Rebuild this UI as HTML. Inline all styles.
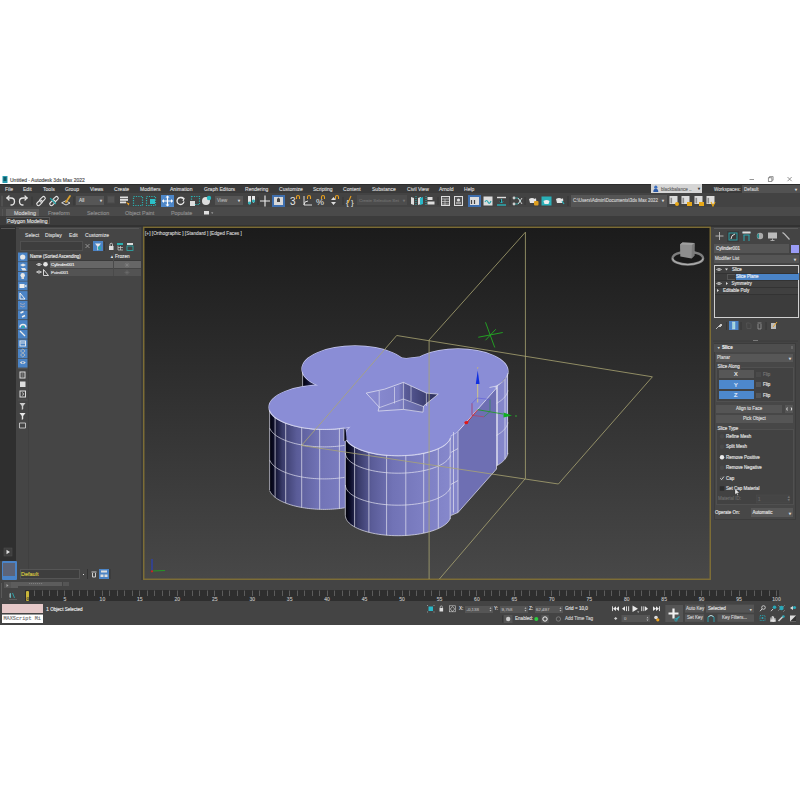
<!DOCTYPE html>
<html><head><meta charset="utf-8">
<style>
*{margin:0;padding:0;box-sizing:border-box}
html,body{-webkit-font-smoothing:antialiased;width:800px;height:800px;background:#fff;overflow:hidden;position:relative;font-family:"Liberation Sans",sans-serif}
.a{position:absolute}
.t{position:absolute;white-space:nowrap;font-size:5px;line-height:6px;color:#d8d8d8;-webkit-text-stroke:0.15px currentColor}
svg{overflow:visible}
</style></head><body>
<div class="a" style="left:0;top:184px;width:800px;height:440px;background:#444"></div>
<!-- ===== TITLE BAR ===== -->
<svg class="a" style="left:0;top:170px" width="800" height="15">
 <rect x="2.5" y="6" width="5" height="7" fill="#2a9db0"/><rect x="3.5" y="7" width="3" height="4" fill="#0e5d6a"/>
 <path d="M749.5 9.5h4.5" stroke="#6a6a6a" stroke-width="0.7"/>
 <rect x="768.3" y="7.8" width="3.6" height="3.6" fill="none" stroke="#6a6a6a" stroke-width="0.7"/><path d="M769.5 7.8v-1.2h3.6v3.6h-1.2" fill="none" stroke="#6a6a6a" stroke-width="0.7"/>
 <path d="M787.5 7l4.2 4.2M791.7 7l-4.2 4.2" stroke="#6a6a6a" stroke-width="0.7"/>
</svg>
<div class="t" style="left:10px;top:177px;font-size:5px;color:#4a4a4a">Untitled - Autodesk 3ds Max 2022</div>

<!-- ===== MENU BAR ===== -->
<div class="a" style="left:0;top:184.3px;width:800px;height:9px;background:#3a3a3a;border-top:0.7px solid #2c2c2c"></div>
<div class="t" style="top:186.3px;font-size:5.05px;color:#d6d6d6;left:0">
<span class="a" style="left:5px">File</span><span class="a" style="left:23px">Edit</span><span class="a" style="left:43px">Tools</span><span class="a" style="left:65px">Group</span><span class="a" style="left:90px">Views</span><span class="a" style="left:114px">Create</span><span class="a" style="left:140px">Modifiers</span><span class="a" style="left:170px">Animation</span><span class="a" style="left:204px">Graph Editors</span><span class="a" style="left:245px">Rendering</span><span class="a" style="left:279px">Customize</span><span class="a" style="left:313px">Scripting</span><span class="a" style="left:343px">Content</span><span class="a" style="left:372px">Substance</span><span class="a" style="left:407px">Civil View</span><span class="a" style="left:439px">Arnold</span><span class="a" style="left:464px">Help</span>
</div>
<div class="a" style="left:651px;top:184px;width:51px;height:9px;background:#d6d6d6"></div>
<svg class="a" style="left:652px;top:184px" width="8" height="9"><circle cx="3.8" cy="3.2" r="1.6" fill="#3b6fc0"/><path d="M1.3 8q0-3.3 2.5-3.3q2.5 0 2.5 3.3z" fill="#2c5aa8"/></svg>
<div class="t" style="left:661px;top:186.5px;font-size:4.6px;color:#6a6a6a">blackbalance ..</div>
<div class="t" style="left:697px;top:186px;font-size:4px;color:#333">&#9660;</div>
<div class="t" style="left:714px;top:186.5px;font-size:4.6px;color:#cfcfcf">Workspaces:</div>
<div class="a" style="left:742px;top:185px;width:58px;height:8px;background:#525252"></div>
<div class="t" style="left:744px;top:186.5px;font-size:4.6px;color:#d0d0d0">Default</div>
<div class="t" style="left:794px;top:186.5px;font-size:4px;color:#ddd">&#9660;</div>

<!-- ===== MAIN TOOLBAR ===== -->
<div class="a" style="left:0;top:193.2px;width:800px;height:14px;background:#434343"></div>
<div class="a" style="left:76px;top:196px;width:28px;height:9px;background:#565656"></div>
<div class="t" style="left:79px;top:197.5px;font-size:4.8px;color:#d0d0d0">All</div>
<div class="t" style="left:99px;top:198px;font-size:4px;color:#ddd">&#9660;</div>
<div class="a" style="left:161px;top:195px;width:13px;height:12px;background:#4e87c8"></div>
<div class="a" style="left:215px;top:196px;width:28px;height:9px;background:#565656"></div>
<div class="t" style="left:217px;top:197.5px;font-size:4.8px;color:#aaa">View</div>
<div class="t" style="left:237px;top:198px;font-size:4px;color:#ddd">&#9660;</div>
<div class="a" style="left:272px;top:195px;width:13px;height:12px;background:#3f6fae"></div>
<div class="a" style="left:274px;top:197px;width:9px;height:8px;background:#d8d8d8"></div>
<div class="a" style="left:357px;top:195px;width:50px;height:10px;background:#4c4c4c"></div>
<div class="t" style="left:359px;top:197.5px;font-size:4.35px;color:#6e6e6e">Create Selection Set</div>
<div class="t" style="left:402px;top:198px;font-size:4px;color:#777">&#9660;</div>
<div class="a" style="left:468px;top:195px;width:13px;height:12px;background:#3f6fae"></div>
<div class="a" style="left:571px;top:195px;width:96px;height:12px;background:#555"></div>
<div class="t" style="left:573px;top:197.5px;font-size:4.5px;color:#cdcdcd">C:\Users\Admin\Documents\3ds Max 2022</div>
<div class="t" style="left:661px;top:198px;font-size:4px;color:#ddd">&#9660;</div>
<svg class="a" style="left:0;top:193px" width="800" height="15">
 <g fill="none" stroke="#e6e6e6" stroke-width="1.3" stroke-linecap="round">
  <path d="M2 3v10" stroke="#666" stroke-width="0.8"/>
  <path d="M7 5h4q3.5 0 3.5 3.5t-3.5 3.5"/><path d="M9 3l-2 2l2 2"/>
  <path d="M27 5h-4q-3.5 0-3.5 3.5t3.5 3.5"/><path d="M25 3l2 2l-2 2"/>
  <path d="M32 4v8" stroke="#333" stroke-width="0.8"/>
  <rect x="36.3" y="8.2" width="6.5" height="3.4" rx="1.7" transform="rotate(-45 39.5 9.9)" stroke-width="1.1"/><rect x="39.2" y="4.6" width="6.5" height="3.4" rx="1.7" transform="rotate(-45 42.5 6.3)" stroke-width="1.1"/>
  <rect x="49.3" y="8.2" width="6.5" height="3.4" rx="1.7" transform="rotate(-45 52.5 9.9)" stroke-width="1.1"/><rect x="52.2" y="4.6" width="6.5" height="3.4" rx="1.7" transform="rotate(-45 55.5 6.3)" stroke-width="1.1"/>
  <path d="M50.5 5.5l5 5" stroke="#22a3a8" stroke-width="1.3"/>
  <path d="M62 10l4 2l4-2l-4-2z" stroke-width="0.9"/>
  <path d="M66 9l4-6" stroke="#d8a030" stroke-width="1.8"/>
  <path d="M74 4v8" stroke="#333" stroke-width="0.8"/>
 </g>
 <rect x="107.5" y="3" width="7" height="7" fill="#555" stroke="#4a4a4a"/>
 <g fill="#e0e0e0"><rect x="120" y="3.5" width="8" height="1.8"/><rect x="120" y="6" width="8" height="1.8"/><rect x="120" y="8.5" width="6" height="1.8"/></g>
 <path d="M126 9l2.5 3.5l1-2z" fill="#f0a020"/>
 <g fill="none" stroke="#2bb0b0" stroke-width="1.2" stroke-dasharray="1.2 1.2">
  <rect x="133.5" y="3.5" width="9" height="9"/><rect x="146.5" y="3.5" width="9" height="9"/>
 </g>
 <rect x="150" y="6" width="5" height="5" fill="#2cc0c8"/>
 <g fill="none" stroke="#fff" stroke-width="1.2">
  <path d="M167.5 3v10M162.5 8h10"/>
 </g>
 <g fill="#fff"><path d="M165.5 4.5l2-2l2 2zM165.5 11.5l2 2l2-2zM164 6l-2 2l2 2zM171 6l2 2l-2 2z"/></g>
 <path d="M183 5.5a3.5 3.5 0 1 0 1 3" fill="none" stroke="#eee" stroke-width="1.3"/>
 <path d="M181.5 4l2.5 1.5l-1 2.5" fill="none" stroke="#eee" stroke-width="1.2"/>
 <g fill="none" stroke="#2bb0b0" stroke-width="1.2" stroke-dasharray="1.2 1.2"><rect x="191.5" y="3.5" width="8" height="8"/></g>
 <rect x="190" y="8" width="5" height="5" fill="#ddd"/>
 <circle cx="206" cy="8" r="4" fill="#ddd"/><circle cx="209" cy="5" r="2.2" fill="#2ab8c0"/>
 <path d="M248 3v5q0 2 1.5 3.5q1.5-1.5 1.5-3.5v-5z" fill="#e8e8e8"/><path d="M252 3v4q0 2 1.5 3q1.5-1 1.5-3v-4z" fill="#e8e8e8"/>
 <circle cx="249.5" cy="10" r="1.5" fill="#2ab0b8"/><circle cx="253.5" cy="8" r="1.5" fill="#2ab0b8"/>
 <path d="M258 4v8" stroke="#333" stroke-width="0.8"/>
 <path d="M265 2.5v11M260 8h10" stroke="#eee" stroke-width="1.1"/>
 <path d="M277 6l1.5-1.5l1.5 1.5v3h-3z" fill="#444"/>
 <text x="290" y="12" font-size="10" fill="#e8e8e8" font-family="Liberation Sans">3</text>
 <g fill="none" stroke="#e8a020" stroke-width="1.1"><path d="M296.5 6v-2a1.5 1.5 0 0 1 3 0v2"/><path d="M307.5 6v-2a1.5 1.5 0 0 1 3 0v2"/><path d="M321.5 6v-2a1.5 1.5 0 0 1 3 0v2"/><path d="M335.5 6v-2a1.5 1.5 0 0 1 3 0v2"/><path d="M351 3l-3 7"/></g>
 <path d="M304 3v9h8M304 12q0-4 4-4" fill="none" stroke="#ddd" stroke-width="1"/>
 <text x="316" y="12" font-size="9" fill="#e8e8e8" font-family="Liberation Sans">%</text>
 <path d="M331 7l2.5-3l2.5 3zM331 9l2.5 3l2.5-3z" fill="#ddd"/>
 <path d="M343 4v8" stroke="#333" stroke-width="0.8"/>
 <text x="346" y="11.5" font-size="8" fill="#e8e8e8" font-family="Liberation Sans">{ }</text>
 <path d="M411 4l3 1v7l-3-1zM418 5l3-1v7l-3 1z" fill="#ddd"/><path d="M416 3v10" stroke="#2ab0b0" stroke-dasharray="1 1"/>
 <path d="M420 5l3-1v7l-3 1z" fill="#2ab8c8"/>
 <path d="M426 3v10" stroke="#2ab0b0" stroke-width="1" stroke-dasharray="1 1"/><rect x="427.5" y="4" width="5" height="3" fill="#ddd"/><rect x="427.5" y="8.5" width="7" height="3" fill="#ddd"/>
 <path d="M438 4v8" stroke="#333" stroke-width="0.8"/>
 <rect x="441.5" y="3.5" width="8" height="9" fill="#555" stroke="#ddd" stroke-width="1"/><path d="M442 6h7M442 8.5h7M442 11h7M445 6v6" stroke="#ddd" stroke-width="0.6"/>
 <rect x="454.5" y="3.5" width="8" height="9" fill="#555" stroke="#ddd" stroke-width="1"/><circle cx="458.5" cy="7" r="1.6" fill="#ddd"/><path d="M456 10h5" stroke="#ddd"/>
 <rect x="470" y="4" width="9" height="8" fill="#ddd"/><path d="M471.5 7v4M474.5 7v4" stroke="#444" stroke-width="1.2"/>
 <rect x="483.5" y="3.5" width="9" height="9" fill="#ddd"/><path d="M485 9q1.5-3 3 0t3-1" fill="none" stroke="#2aa8b0" stroke-width="1.2"/>
 <path d="M497 4.5h9" stroke="#ddd" stroke-width="1.4"/><path d="M497 12h9" stroke="#2ab0b8" stroke-width="1.4"/><path d="M501.5 6v4l-1.5-1.5M501.5 10l1.5-1.5" stroke="#2ab0b8" stroke-width="1"/>
 <path d="M510 4v8" stroke="#333" stroke-width="0.8"/>
 <g stroke="#2aa8a8" fill="none" stroke-width="0.9"><path d="M514 5l4 0l3 3M514 11l4 0l3-3"/></g><circle cx="514" cy="5" r="1.4" fill="#ccc"/><circle cx="514" cy="11" r="1.4" fill="#ccc"/><path d="M518 5l4 6M522 5l-4 6" stroke="#ddd" stroke-width="0.9"/>
 <path d="M525 4v8" stroke="#333" stroke-width="0.8"/>
 <path d="M529 6q3-2 6 0l1-1q1 3-1 5h-5z" fill="#e6e6e6"/><rect x="534" y="8" width="4.5" height="4.5" rx="1" fill="#e0a020"/>
 <rect x="541.5" y="3.5" width="10" height="9" fill="#2ab0b8"/><path d="M543.5 8q3-2 6 0l-1 3h-4z" fill="#eee"/>
 <path d="M556 6q3-2 6 0l1-1q1 3-1 5h-5z" fill="#e6e6e6"/><path d="M562 8l2 3" stroke="#2ab0b8" stroke-width="1.2"/>
 <path d="M568 3v10" stroke="#333" stroke-width="0.8"/>
 <g fill="#dcdcdc"><rect x="669.5" y="3" width="8" height="8"/><rect x="681.5" y="3" width="8" height="8"/><rect x="694.5" y="3" width="8" height="8"/><rect x="706.5" y="3" width="8" height="8"/></g>
 <g fill="#8a8a8a"><rect x="670.5" y="4.8" width="1.6" height="5.5"/><rect x="682.5" y="4.8" width="1.6" height="5.5"/><rect x="695.5" y="4.8" width="1.6" height="5.5"/><rect x="707.5" y="4.8" width="1.6" height="5.5"/></g>
 <circle cx="677" cy="11" r="2" fill="#e8a818"/><rect x="687" y="9" width="5" height="4" fill="#e8a818"/><rect x="699" y="9" width="5" height="4" fill="#e8a818"/><path d="M711 9l2 4l2-4" stroke="#e8a818" fill="none" stroke-width="1.2"/>
</svg>

<!-- ===== RIBBON ===== -->
<div class="a" style="left:0;top:207.2px;width:800px;height:9px;background:#4a4a4a"></div>
<div class="a" style="left:2px;top:209px;width:1px;height:15px;background:#555"></div>
<div class="a" style="left:6px;top:209px;width:33px;height:7px;background:#5e5e5e"></div>
<div class="t" style="top:210px;font-size:5.4px;left:0;color:#8e8e8e">
<span class="a" style="left:14px;color:#cfcfcf">Modeling</span><span class="a" style="left:48px">Freeform</span><span class="a" style="left:87px">Selection</span><span class="a" style="left:125px">Object Paint</span><span class="a" style="left:171px">Populate</span>
</div>
<svg class="a" style="left:200px;top:209px" width="20" height="8"><rect x="4" y="2" width="5" height="3.5" fill="#e0e0e0"/><path d="M11 3.5l1.2 1.2l1.2-1.2z" fill="#bbb"/></svg>
<div class="a" style="left:0;top:216.2px;width:800px;height:9px;background:#3c3c3c"></div>
<div class="a" style="left:5.5px;top:216.8px;width:44px;height:7.6px;background:#383838;border:0.8px solid #555"></div>
<div class="t" style="left:7px;top:218px;font-size:5.1px;color:#e0e0e0">Polygon Modeling</div>
<div class="a" style="left:0;top:225px;width:800px;height:2px;background:#323232"></div>
<!-- ===== LEFT STRIP + SCENE EXPLORER ===== -->
<div class="a" style="left:0;top:227px;width:16px;height:334px;background:#2f2f2f"></div>
<div class="a" style="left:1px;top:227.5px;width:14px;height:1px;background:#555"></div>
<div class="a" style="left:19px;top:227.5px;width:120px;height:1px;background:#555"></div>
<div class="a" style="left:16px;top:229px;width:126px;height:351px;background:#454545"></div>
<div class="a" style="left:141px;top:227px;width:2px;height:353px;background:#3a3a3a"></div>
<div class="t" style="top:231.6px;font-size:5.1px;color:#dadada;left:0">
<span class="a" style="left:25px">Select</span><span class="a" style="left:45px">Display</span><span class="a" style="left:69px">Edit</span><span class="a" style="left:85px">Customize</span>
</div>
<div class="a" style="left:20px;top:241px;width:63px;height:10px;background:#3e3e3e;border:1px solid #505050"></div>
<div class="a" style="left:93px;top:241px;width:10px;height:10px;background:#4b84c6"></div>
<div class="a" style="left:28px;top:252px;width:113px;height:9px;background:#444;border-bottom:0.6px solid #3a3a3a"></div>
<div class="t" style="left:30px;top:253.5px;font-size:4.45px;color:#e6e6e6">Name (Sorted Ascending)</div>
<div class="t" style="left:110px;top:254px;font-size:4px;color:#e6e6e6">&#9650;</div>
<div class="t" style="left:115px;top:253.5px;font-size:4.7px;color:#e0e0e0">Frozen</div>
<div class="a" style="left:50px;top:261px;width:91px;height:7px;background:#666"></div>
<div class="a" style="left:50px;top:268.5px;width:91px;height:7.5px;background:#535353"></div>
<div class="a" style="left:113px;top:252px;width:0.7px;height:24px;background:#4a4a4a"></div>
<div class="t" style="left:51px;top:261.5px;font-size:4.4px;color:#ececec">Cylinder001</div>
<div class="t" style="left:51px;top:269.5px;font-size:4.4px;color:#e6e6e6">Point001</div>
<div class="a" style="left:28px;top:276px;width:1px;height:304px;background:#404040"></div>

<svg class="a" style="left:0;top:0" width="800" height="800">
<path d="M85.5 244l4 4M89.5 244l-4 4" stroke="#9a9a9a" stroke-width="0.9"/>
<path d="M95 243.5h6l-2.3 3v3l-1.4 1v-4z" fill="#e8e8e8"/><rect x="98" y="246.5" width="3" height="3" fill="#2aa8a8"/>
<path d="M104.5 242v9" stroke="#333" stroke-width="0.8"/>
<rect x="109" y="246" width="4.5" height="4" fill="#ddd"/><path d="M110 246v-1.5a1.2 1.2 0 0 1 2.5 0v1.5" fill="none" stroke="#ddd" stroke-width="0.8"/>
<rect x="117" y="243" width="6" height="2" fill="#2ab0b0"/><path d="M118 245.5v4.5h5M118 247.5h5M120.5 246v4" stroke="#ccc" stroke-width="0.7" fill="none"/>
<rect x="127" y="243" width="6" height="2" fill="#ddd"/><rect x="127" y="246" width="6" height="4.5" fill="none" stroke="#2ab0b0" stroke-width="0.8"/>
<rect x="18" y="252.5" width="9.5" height="9" fill="#4b84c6"/>
<rect x="18" y="262.1" width="9.5" height="9" fill="#4b84c6"/>
<rect x="18" y="271.8" width="9.5" height="9" fill="#4b84c6"/>
<rect x="18" y="281.4" width="9.5" height="9" fill="#4b84c6"/>
<rect x="18" y="291.1" width="9.5" height="9" fill="#4b84c6"/>
<rect x="18" y="300.8" width="9.5" height="9" fill="#4b84c6"/>
<rect x="18" y="310.4" width="9.5" height="9" fill="#4b84c6"/>
<rect x="18" y="320.1" width="9.5" height="9" fill="#4b84c6"/>
<rect x="18" y="329.7" width="9.5" height="9" fill="#4b84c6"/>
<rect x="18" y="339.4" width="9.5" height="9" fill="#4b84c6"/>
<rect x="18" y="349.0" width="9.5" height="9" fill="#4b84c6"/>
<rect x="18" y="358.6" width="9.5" height="9" fill="#4b84c6"/>
<circle cx="22.7" cy="257" r="2.6" fill="#e8e8e8"/>
<path d="M20 265l3-1.5l3 1.5l-3 1.5zM21 268l4 0l1.5 2.5h-4z" fill="#e6e6e6"/>
<circle cx="22.7" cy="275.2" r="2.2" fill="#e8e8e8"/><path d="M21.5 277v2h2.5v-2" fill="#ddd"/>
<rect x="19.5" y="284" width="5" height="4" fill="#eee"/><path d="M24.5 286l2-1.5v3z" fill="#eee"/>
<path d="M20 299v-6l5 6z" fill="none" stroke="#eee" stroke-width="1"/>
<path d="M20 303.5q3 2 5 0M20 306q3 2 5 0" stroke="#aab" fill="none" stroke-width="0.9"/>
<path d="M20.5 313l3-1.5M22 317l3-1.5" stroke="#eee" stroke-width="1.4"/>
<path d="M20 327.5a3 3 0 0 1 6 0" stroke="#eee" fill="none" stroke-width="1.3"/><circle cx="23" cy="327" r="1.3" fill="#2ab0a8"/>
<path d="M20 331l5 5" stroke="#eee" stroke-width="1.2"/>
<rect x="20" y="341" width="5.5" height="5" fill="none" stroke="#eee" stroke-width="0.9"/><path d="M20.5 343h4.5" stroke="#eee" stroke-width="0.9"/>
<path d="M20.5 351l2.3-2l2.3 2l-2.3 2zM20.5 355l2.3-2l2.3 2l-2.3 2z" fill="none" stroke="#bbb" stroke-width="0.8"/>
<path d="M19.8 362.5q3-3 6 0q-3 3-6 0z" fill="#dcdcdc"/><circle cx="22.8" cy="362.5" r="1" fill="#4b84c6"/>
<path d="M18 368.5h9.5" stroke="#555" stroke-width="0.8"/>
<rect x="20" y="372" width="5" height="6" fill="none" stroke="#ddd" stroke-width="1"/><path d="M21.5 374h2M21.5 376h2" stroke="#ddd" stroke-width="0.6"/>
<rect x="20" y="381.5" width="5.5" height="5.5" fill="#ddd"/>
<rect x="20" y="391" width="5.5" height="6" fill="none" stroke="#ddd" stroke-width="1"/><path d="M22 392.5l2 1.5l-2 1.5" stroke="#ddd" fill="none" stroke-width="0.7"/>
<path d="M18 400h9.5" stroke="#555" stroke-width="0.8"/>
<path d="M19.5 403h6l-2.3 3v3l-1.4 1v-4z" fill="#ccc"/>
<path d="M19.5 413h6l-2.3 3v3l-1.4 1v-4z" fill="#e8e8e8"/>
<path d="M19.5 423h6v5h-6z" fill="none" stroke="#ccc" stroke-width="0.9"/>
<path d="M36.5 264.5q2.5-2.5 5 0q-2.5 2.5-5 0z" fill="none" stroke="#ddd" stroke-width="0.8"/><circle cx="39" cy="264.5" r="0.8" fill="#ddd"/>
<circle cx="45.5" cy="264.3" r="2.3" fill="#e6e6e6"/>
<path d="M36.5 272q2.5-2.5 5 0q-2.5 2.5-5 0z" fill="none" stroke="#ddd" stroke-width="0.8"/><circle cx="39" cy="272" r="0.8" fill="#ddd"/>
<path d="M43.5 275.5v-6l5 6z" fill="none" stroke="#e6e6e6" stroke-width="0.9"/>
<path d="M127 262.5v5M124.5 265h5M125.3 263.3l3.4 3.4M128.7 263.3l-3.4 3.4" stroke="#8a8a8a" stroke-width="0.5"/>
<path d="M127 270v5M124.5 272.5h5M125.3 270.8l3.4 3.4M128.7 270.8l-3.4 3.4" stroke="#707070" stroke-width="0.5"/>
<rect x="4" y="548" width="8" height="8" fill="#3e3e3e" stroke="#505050" stroke-width="0.5"/><path d="M6.5 549.8v4.4l3.5-2.2z" fill="#ddd"/>
</svg>
<!-- layer bar -->
<div class="a" style="left:1.5px;top:561px;width:15px;height:19px;background:#4a84c8;border-radius:1px"></div>
<div class="a" style="left:3px;top:563px;width:12px;height:13px;background:#5d6478"></div>
<div class="a" style="left:20px;top:569px;width:60px;height:10px;background:#3e3e3e;border:1px solid #555"></div>
<div class="t" style="left:21px;top:570.5px;font-size:5.5px;color:#d8c840">Default</div>
<div class="a" style="left:82.5px;top:573.5px;width:1.5px;height:1.5px;background:#ddd"></div>
<div class="a" style="left:87px;top:569px;width:1px;height:10px;background:#333"></div>
<div class="a" style="left:99px;top:569px;width:10px;height:10px;background:#4b84c6"></div>
<svg class="a" style="left:0;top:0" width="800" height="800">
<path d="M91.5 572h5M92.5 573v4h3v-4" stroke="#ddd" stroke-width="0.9" fill="none"/>
<rect x="101" y="570.5" width="6" height="2" fill="#ddd"/><rect x="100.5" y="574.5" width="3" height="2.5" fill="#ddd"/><rect x="104.5" y="574.5" width="3" height="2.5" fill="#ddd"/>
<path d="M110 569v10" stroke="#333" stroke-width="0.8"/>
</svg>
<svg class="a" style="left:0;top:0" width="800" height="800">
<defs>
<linearGradient id="gBL" gradientUnits="userSpaceOnUse" x1="302.0" y1="0" x2="408.0" y2="0"><stop offset="0" stop-color="#000008"/><stop offset="0.05" stop-color="#0e0f2c"/><stop offset="0.12" stop-color="#383a68"/><stop offset="0.25" stop-color="#5a5c98"/><stop offset="0.45" stop-color="#7173b6"/><stop offset="0.7" stop-color="#7c7ec2"/><stop offset="1" stop-color="#8688cc"/></linearGradient>
<linearGradient id="gFL" gradientUnits="userSpaceOnUse" x1="269.1" y1="0" x2="379.4" y2="0"><stop offset="0" stop-color="#000008"/><stop offset="0.05" stop-color="#0e0f2c"/><stop offset="0.12" stop-color="#383a68"/><stop offset="0.25" stop-color="#5a5c98"/><stop offset="0.45" stop-color="#7173b6"/><stop offset="0.7" stop-color="#7c7ec2"/><stop offset="1" stop-color="#8688cc"/></linearGradient>
<linearGradient id="gFR" gradientUnits="userSpaceOnUse" x1="345.4" y1="0" x2="450.8" y2="0"><stop offset="0" stop-color="#000008"/><stop offset="0.05" stop-color="#0e0f2c"/><stop offset="0.12" stop-color="#383a68"/><stop offset="0.25" stop-color="#5a5c98"/><stop offset="0.45" stop-color="#7173b6"/><stop offset="0.7" stop-color="#7c7ec2"/><stop offset="1" stop-color="#8688cc"/></linearGradient>
<linearGradient id="gBR" gradientUnits="userSpaceOnUse" x1="408.0" y1="0" x2="508.0" y2="0"><stop offset="0" stop-color="#000008"/><stop offset="0.05" stop-color="#0e0f2c"/><stop offset="0.12" stop-color="#383a68"/><stop offset="0.25" stop-color="#5a5c98"/><stop offset="0.45" stop-color="#7173b6"/><stop offset="0.7" stop-color="#7c7ec2"/><stop offset="1" stop-color="#8688cc"/></linearGradient>
<linearGradient id="gStar" gradientUnits="userSpaceOnUse" x1="366" y1="0" x2="438" y2="0"><stop offset="0" stop-color="#8a8cd2"/><stop offset="0.45" stop-color="#8082c8"/><stop offset="0.55" stop-color="#5a5c98"/><stop offset="0.75" stop-color="#45477c"/><stop offset="1" stop-color="#2a2c58"/></linearGradient>
<linearGradient id="vpg" x1="0" y1="0" x2="0" y2="1"><stop offset="0" stop-color="#1b1b1b"/><stop offset="1" stop-color="#484848"/></linearGradient>
<clipPath id="cut"><path d="M100,100 L751.4,100 L496.5,388 L458,431.5 L300,610 L100,610Z"/></clipPath>
<clipPath id="vpclip"><rect x="144" y="228" width="566" height="351"/></clipPath>
</defs>
<rect x="143" y="226.5" width="568" height="353.5" fill="url(#vpg)"/>
<rect x="143.75" y="227.25" width="566.5" height="352" fill="none" stroke="#807036" stroke-width="1.4"/>
<g clip-path="url(#vpclip)">
<path d="M302.00,369.00 L302.11,370.50 L302.45,372.00 L303.02,373.49 L303.81,374.95 L304.81,376.39 L306.03,377.80 L307.47,379.17 L309.10,380.50 L310.93,381.78 L312.95,383.00 L315.15,384.16 L317.52,385.26 L320.05,386.29 L322.74,387.25 L325.55,388.12 L328.50,388.92 L331.56,389.63 L334.72,390.25 L337.96,390.78 L341.28,391.22 L344.66,391.56 L348.08,391.80 L351.53,391.95 L355.00,392.00 L358.47,391.95 L361.92,391.80 L365.34,391.56 L368.72,391.22 L372.04,390.78 L375.28,390.25 L378.44,389.63 L381.50,388.92 L384.45,388.12 L387.26,387.25 L389.95,386.29 L392.48,385.26 L394.85,384.16 L397.05,383.00 L399.07,381.78 L400.90,380.50 L402.53,379.17 L403.97,377.80 L405.19,376.39 L406.19,374.95 L406.98,373.49 L407.55,372.00 L407.89,370.50 L408.00,369.00 L408.00,449.00 L407.89,450.50 L407.55,452.00 L406.98,453.49 L406.19,454.95 L405.19,456.39 L403.97,457.80 L402.53,459.17 L400.90,460.50 L399.07,461.78 L397.05,463.00 L394.85,464.16 L392.48,465.26 L389.95,466.29 L387.26,467.25 L384.45,468.12 L381.50,468.92 L378.44,469.63 L375.28,470.25 L372.04,470.78 L368.72,471.22 L365.34,471.56 L361.92,471.80 L358.47,471.95 L355.00,472.00 L351.53,471.95 L348.08,471.80 L344.66,471.56 L341.28,471.22 L337.96,470.78 L334.72,470.25 L331.56,469.63 L328.50,468.92 L325.55,468.12 L322.74,467.25 L320.05,466.29 L317.52,465.26 L315.15,464.16 L312.95,463.00 L310.93,461.78 L309.10,460.50 L307.47,459.17 L306.03,457.80 L304.81,456.39 L303.81,454.95 L303.02,453.49 L302.45,452.00 L302.11,450.50 L302.00,449.00Z" fill="url(#gBL)"/>
<path d="M408.00,371.50 L408.11,372.97 L408.43,374.44 L408.96,375.89 L409.70,377.32 L410.65,378.73 L411.81,380.11 L413.16,381.45 L414.70,382.75 L416.43,384.00 L418.33,385.20 L420.41,386.34 L422.64,387.41 L425.03,388.42 L427.56,389.35 L430.22,390.21 L433.00,390.99 L435.89,391.68 L438.87,392.29 L441.93,392.81 L445.06,393.23 L448.25,393.57 L451.47,393.81 L454.73,393.95 L458.00,394.00 L461.27,393.95 L464.53,393.81 L467.75,393.57 L470.94,393.23 L474.07,392.81 L477.13,392.29 L480.11,391.68 L483.00,390.99 L485.78,390.21 L488.44,389.35 L490.97,388.42 L493.36,387.41 L495.59,386.34 L497.67,385.20 L499.57,384.00 L501.30,382.75 L502.84,381.45 L504.19,380.11 L505.35,378.73 L506.30,377.32 L507.04,375.89 L507.57,374.44 L507.89,372.97 L508.00,371.50 L508.00,451.50 L507.89,452.97 L507.57,454.44 L507.04,455.89 L506.30,457.32 L505.35,458.73 L504.19,460.11 L502.84,461.45 L501.30,462.75 L499.57,464.00 L497.67,465.20 L495.59,466.34 L493.36,467.41 L490.97,468.42 L488.44,469.35 L485.78,470.21 L483.00,470.99 L480.11,471.68 L477.13,472.29 L474.07,472.81 L470.94,473.23 L467.75,473.57 L464.53,473.81 L461.27,473.95 L458.00,474.00 L454.73,473.95 L451.47,473.81 L448.25,473.57 L445.06,473.23 L441.93,472.81 L438.87,472.29 L435.89,471.68 L433.00,470.99 L430.22,470.21 L427.56,469.35 L425.03,468.42 L422.64,467.41 L420.41,466.34 L418.33,465.20 L416.43,464.00 L414.70,462.75 L413.16,461.45 L411.81,460.11 L410.65,458.73 L409.70,457.32 L408.96,455.89 L408.43,454.44 L408.11,452.97 L408.00,451.50Z" fill="url(#gBR)"/>
<path d="M458,431.5 L496.5,388 L496.5,469 L458,512.5Z" fill="#6e6fb3"/>
<path d="M450.5,435.5 L458,431.5 L458,512.5 L450.5,515.5Z" fill="#8486ca"/>
<path d="M269.05,407.20 L269.17,408.65 L269.52,410.10 L270.11,411.53 L270.93,412.95 L271.98,414.34 L273.25,415.70 L274.74,417.02 L276.45,418.30 L278.35,419.53 L280.46,420.71 L282.75,421.84 L285.22,422.90 L287.85,423.89 L290.65,424.81 L293.58,425.66 L296.65,426.43 L299.84,427.11 L303.13,427.71 L306.51,428.22 L309.96,428.64 L313.48,428.97 L317.04,429.21 L320.64,429.35 L324.25,429.40 L327.86,429.35 L331.46,429.21 L335.02,428.97 L338.54,428.64 L341.99,428.22 L345.37,427.71 L348.66,427.11 L351.85,426.43 L354.92,425.66 L357.85,424.81 L360.65,423.89 L363.28,422.90 L365.75,421.84 L368.04,420.71 L370.15,419.53 L372.05,418.30 L373.76,417.02 L375.25,415.70 L376.52,414.34 L377.57,412.95 L378.39,411.53 L378.98,410.10 L379.33,408.65 L379.45,407.20 L379.45,487.20 L379.33,488.65 L378.98,490.10 L378.39,491.53 L377.57,492.95 L376.52,494.34 L375.25,495.70 L373.76,497.02 L372.05,498.30 L370.15,499.53 L368.04,500.71 L365.75,501.84 L363.28,502.90 L360.65,503.89 L357.85,504.81 L354.92,505.66 L351.85,506.43 L348.66,507.11 L345.37,507.71 L341.99,508.22 L338.54,508.64 L335.02,508.97 L331.46,509.21 L327.86,509.35 L324.25,509.40 L320.64,509.35 L317.04,509.21 L313.48,508.97 L309.96,508.64 L306.51,508.22 L303.13,507.71 L299.84,507.11 L296.65,506.43 L293.58,505.66 L290.65,504.81 L287.85,503.89 L285.22,502.90 L282.75,501.84 L280.46,500.71 L278.35,499.53 L276.45,498.30 L274.74,497.02 L273.25,495.70 L271.98,494.34 L270.93,492.95 L270.11,491.53 L269.52,490.10 L269.17,488.65 L269.05,487.20Z" fill="url(#gFL)"/>
<path d="M345.40,435.50 L345.51,436.82 L345.85,438.14 L346.41,439.44 L347.20,440.73 L348.20,441.99 L349.41,443.23 L350.83,444.43 L352.46,445.60 L354.28,446.72 L356.29,447.80 L358.48,448.82 L360.84,449.78 L363.35,450.69 L366.02,451.53 L368.82,452.30 L371.75,452.99 L374.79,453.62 L377.93,454.16 L381.16,454.63 L384.46,455.01 L387.82,455.31 L391.22,455.53 L394.65,455.66 L398.10,455.70 L401.55,455.66 L404.98,455.53 L408.38,455.31 L411.74,455.01 L415.04,454.63 L418.27,454.16 L421.41,453.62 L424.45,452.99 L427.38,452.30 L430.18,451.53 L432.85,450.69 L435.36,449.78 L437.72,448.82 L439.91,447.80 L441.92,446.72 L443.74,445.60 L445.37,444.43 L446.79,443.23 L448.00,441.99 L449.00,440.73 L449.79,439.44 L450.35,438.14 L450.69,436.82 L450.80,435.50 L450.80,515.50 L450.69,516.82 L450.35,518.14 L449.79,519.44 L449.00,520.73 L448.00,521.99 L446.79,523.23 L445.37,524.43 L443.74,525.60 L441.92,526.72 L439.91,527.80 L437.72,528.82 L435.36,529.78 L432.85,530.69 L430.18,531.53 L427.38,532.30 L424.45,532.99 L421.41,533.62 L418.27,534.16 L415.04,534.63 L411.74,535.01 L408.38,535.31 L404.98,535.53 L401.55,535.66 L398.10,535.70 L394.65,535.66 L391.22,535.53 L387.82,535.31 L384.46,535.01 L381.16,534.63 L377.93,534.16 L374.79,533.62 L371.75,532.99 L368.82,532.30 L366.02,531.53 L363.35,530.69 L360.84,529.78 L358.48,528.82 L356.29,527.80 L354.28,526.72 L352.46,525.60 L350.83,524.43 L349.41,523.23 L348.20,521.99 L347.20,520.73 L346.41,519.44 L345.85,518.14 L345.51,516.82 L345.40,515.50Z" fill="url(#gFR)"/>
<g clip-path="url(#cut)"><path d="M302.00,369.00 a53.0,23.0 0 1 0 106.00,0 a53.0,23.0 0 1 0 -106.00,0Z M269.05,407.20 a55.2,22.2 0 1 0 110.40,0 a55.2,22.2 0 1 0 -110.40,0Z M345.40,435.50 a52.7,20.2 0 1 0 105.40,0 a52.7,20.2 0 1 0 -105.40,0Z M408.00,371.50 a50.0,22.5 0 1 0 100.00,0 a50.0,22.5 0 1 0 -100.00,0Z M355.00,369.00 L324.25,407.20 L398.10,435.50 L458.00,371.50Z M398.1,435.5 L450.8,435.5 L458,431.5 L496.5,388 L458,371.5Z M385,356 L390,372 L420,372 L428,356 L406.25,358.6Z" fill="none" stroke="#c4c6ee" stroke-width="1.3"/><path d="M302.00,369.00 a53.0,23.0 0 1 0 106.00,0 a53.0,23.0 0 1 0 -106.00,0Z M269.05,407.20 a55.2,22.2 0 1 0 110.40,0 a55.2,22.2 0 1 0 -110.40,0Z M345.40,435.50 a52.7,20.2 0 1 0 105.40,0 a52.7,20.2 0 1 0 -105.40,0Z M408.00,371.50 a50.0,22.5 0 1 0 100.00,0 a50.0,22.5 0 1 0 -100.00,0Z M355.00,369.00 L324.25,407.20 L398.10,435.50 L458.00,371.50Z M398.1,435.5 L450.8,435.5 L458,431.5 L496.5,388 L458,371.5Z M385,356 L390,372 L420,372 L428,356 L406.25,358.6Z" fill="#8a8dd6" fill-rule="nonzero"/></g>
<path d="M269.60,410.33 V490.33 M275.10,417.31 V497.31 M285.70,423.09 V503.09 M301.70,427.46 V507.46 M319.70,429.32 V509.32 M339.40,428.55 V508.55 M269.80,410.85 L270.17,411.66 L270.62,412.46 L271.14,413.26 L271.74,414.05 L272.41,414.82 L273.15,415.59 L273.96,416.35 L274.84,417.09 L275.78,417.82 L276.80,418.54 L277.87,419.24 L279.02,419.92 L280.22,420.59 L281.49,421.24 L282.81,421.87 L284.19,422.48 L285.63,423.06 L287.12,423.63 L288.66,424.17 L290.25,424.69 L291.89,425.19 L293.57,425.66 L295.29,426.10 L297.06,426.52 L298.86,426.91 L300.70,427.28 L302.56,427.62 L304.46,427.92 L306.39,428.21 L308.34,428.46 L310.31,428.68 L312.30,428.87 L314.31,429.04 L316.33,429.17 L318.36,429.27 L320.40,429.35 L322.45,429.39 L324.50,429.40 L326.55,429.38 L328.59,429.33 L330.63,429.25 L332.66,429.14 L334.68,429.00 L336.68,428.83 L338.67,428.63 L340.64,428.40 L342.58,428.14 L344.50,427.85 M269.80,428.35 L270.17,429.16 L270.62,429.96 L271.14,430.76 L271.74,431.55 L272.41,432.32 L273.15,433.09 L273.96,433.85 L274.84,434.59 L275.78,435.32 L276.80,436.04 L277.87,436.74 L279.02,437.42 L280.22,438.09 L281.49,438.74 L282.81,439.37 L284.19,439.98 L285.63,440.56 L287.12,441.13 L288.66,441.67 L290.25,442.19 L291.89,442.69 L293.57,443.16 L295.29,443.60 L297.06,444.02 L298.86,444.41 L300.70,444.78 L302.56,445.12 L304.46,445.42 L306.39,445.71 L308.34,445.96 L310.31,446.18 L312.30,446.37 L314.31,446.54 L316.33,446.67 L318.36,446.77 L320.40,446.85 L322.45,446.89 L324.50,446.90 L326.55,446.88 L328.59,446.83 L330.63,446.75 L332.66,446.64 L334.68,446.50 L336.68,446.33 L338.67,446.13 L340.64,445.90 L342.58,445.64 L344.50,445.35 M269.80,460.35 L270.17,461.16 L270.62,461.96 L271.14,462.76 L271.74,463.55 L272.41,464.32 L273.15,465.09 L273.96,465.85 L274.84,466.59 L275.78,467.32 L276.80,468.04 L277.87,468.74 L279.02,469.42 L280.22,470.09 L281.49,470.74 L282.81,471.37 L284.19,471.98 L285.63,472.56 L287.12,473.13 L288.66,473.67 L290.25,474.19 L291.89,474.69 L293.57,475.16 L295.29,475.60 L297.06,476.02 L298.86,476.41 L300.70,476.78 L302.56,477.12 L304.46,477.42 L306.39,477.71 L308.34,477.96 L310.31,478.18 L312.30,478.37 L314.31,478.54 L316.33,478.67 L318.36,478.77 L320.40,478.85 L322.45,478.89 L324.50,478.90 L326.55,478.88 L328.59,478.83 L330.63,478.75 L332.66,478.64 L334.68,478.50 L336.68,478.33 L338.67,478.13 L340.64,477.90 L342.58,477.64 L344.50,477.35 M269.80,490.85 L270.17,491.66 L270.62,492.46 L271.14,493.26 L271.74,494.05 L272.41,494.82 L273.15,495.59 L273.96,496.35 L274.84,497.09 L275.78,497.82 L276.80,498.54 L277.87,499.24 L279.02,499.92 L280.22,500.59 L281.49,501.24 L282.81,501.87 L284.19,502.48 L285.63,503.06 L287.12,503.63 L288.66,504.17 L290.25,504.69 L291.89,505.19 L293.57,505.66 L295.29,506.10 L297.06,506.52 L298.86,506.91 L300.70,507.28 L302.56,507.62 L304.46,507.92 L306.39,508.21 L308.34,508.46 L310.31,508.68 L312.30,508.87 L314.31,509.04 L316.33,509.17 L318.36,509.27 L320.40,509.35 L322.45,509.39 L324.50,509.40 L326.55,509.38 L328.59,509.33 L330.63,509.25 L332.66,509.14 L334.68,509.00 L336.68,508.83 L338.67,508.63 L340.64,508.40 L342.58,508.14 L344.50,507.85 M345.30,435.50 V515.50 M354.60,446.90 V526.90 M368.90,452.32 V532.32 M386.60,455.21 V535.21 M405.80,455.48 V535.48 M423.70,453.16 V533.16 M438.30,448.56 V528.56 M450.20,438.54 V518.54 M345.40,435.50 L345.50,436.77 L345.82,438.03 L346.33,439.29 L347.06,440.53 L347.98,441.75 L349.11,442.94 L350.42,444.11 L351.93,445.24 L353.62,446.33 L355.48,447.38 L357.51,448.38 L359.70,449.34 L362.05,450.23 L364.54,451.07 L367.16,451.85 L369.90,452.56 L372.75,453.21 L375.70,453.79 L378.75,454.29 L381.86,454.72 L385.05,455.07 L388.28,455.35 L391.55,455.54 L394.85,455.66 L398.17,455.70 L401.48,455.66 L404.77,455.54 L408.05,455.34 L411.28,455.06 L414.46,454.70 L417.58,454.27 L420.61,453.76 L423.56,453.19 L426.41,452.54 L429.15,451.82 L431.76,451.04 L434.25,450.20 L436.58,449.30 L438.77,448.35 L440.80,447.34 L442.65,446.29 L444.33,445.19 L445.83,444.06 L447.14,442.90 L448.26,441.70 L449.17,440.48 L449.89,439.24 L450.40,437.98 M345.40,453.00 L345.50,454.27 L345.82,455.53 L346.33,456.79 L347.06,458.03 L347.98,459.25 L349.11,460.44 L350.42,461.61 L351.93,462.74 L353.62,463.83 L355.48,464.88 L357.51,465.88 L359.70,466.84 L362.05,467.73 L364.54,468.57 L367.16,469.35 L369.90,470.06 L372.75,470.71 L375.70,471.29 L378.75,471.79 L381.86,472.22 L385.05,472.57 L388.28,472.85 L391.55,473.04 L394.85,473.16 L398.17,473.20 L401.48,473.16 L404.77,473.04 L408.05,472.84 L411.28,472.56 L414.46,472.20 L417.58,471.77 L420.61,471.26 L423.56,470.69 L426.41,470.04 L429.15,469.32 L431.76,468.54 L434.25,467.70 L436.58,466.80 L438.77,465.85 L440.80,464.84 L442.65,463.79 L444.33,462.69 L445.83,461.56 L447.14,460.40 L448.26,459.20 L449.17,457.98 L449.89,456.74 L450.40,455.48 M345.40,485.00 L345.50,486.27 L345.82,487.53 L346.33,488.79 L347.06,490.03 L347.98,491.25 L349.11,492.44 L350.42,493.61 L351.93,494.74 L353.62,495.83 L355.48,496.88 L357.51,497.88 L359.70,498.84 L362.05,499.73 L364.54,500.57 L367.16,501.35 L369.90,502.06 L372.75,502.71 L375.70,503.29 L378.75,503.79 L381.86,504.22 L385.05,504.57 L388.28,504.85 L391.55,505.04 L394.85,505.16 L398.17,505.20 L401.48,505.16 L404.77,505.04 L408.05,504.84 L411.28,504.56 L414.46,504.20 L417.58,503.77 L420.61,503.26 L423.56,502.69 L426.41,502.04 L429.15,501.32 L431.76,500.54 L434.25,499.70 L436.58,498.80 L438.77,497.85 L440.80,496.84 L442.65,495.79 L444.33,494.69 L445.83,493.56 L447.14,492.40 L448.26,491.20 L449.17,489.98 L449.89,488.74 L450.40,487.48 M345.40,515.50 L345.50,516.77 L345.82,518.03 L346.33,519.29 L347.06,520.53 L347.98,521.75 L349.11,522.94 L350.42,524.11 L351.93,525.24 L353.62,526.33 L355.48,527.38 L357.51,528.38 L359.70,529.34 L362.05,530.23 L364.54,531.07 L367.16,531.85 L369.90,532.56 L372.75,533.21 L375.70,533.79 L378.75,534.29 L381.86,534.72 L385.05,535.07 L388.28,535.35 L391.55,535.54 L394.85,535.66 L398.17,535.70 L401.48,535.66 L404.77,535.54 L408.05,535.34 L411.28,535.06 L414.46,534.70 L417.58,534.27 L420.61,533.76 L423.56,533.19 L426.41,532.54 L429.15,531.82 L431.76,531.04 L434.25,530.20 L436.58,529.30 L438.77,528.35 L440.80,527.34 L442.65,526.29 L444.33,525.19 L445.83,524.06 L447.14,522.90 L448.26,521.70 L449.17,520.48 L449.89,519.24 L450.40,517.98 M453.5,432 V512.5 M458,431.5 V512.5 M450.8,452.5 L458,448.5 M450.8,484.5 L458,480.5 M450.8,515.5 L458,512.5 M497.50,385.29 V465.29 M505.00,379.18 V459.18 M507.60,374.34 V454.34 M496.50,385.86 L496.91,385.63 L497.32,385.40 L497.72,385.16 L498.12,384.93 L498.51,384.69 L498.89,384.45 L499.26,384.21 L499.63,383.97 L499.98,383.72 L500.34,383.47 L500.68,383.22 L501.02,382.97 L501.35,382.71 L501.67,382.46 L501.99,382.20 L502.29,381.94 L502.59,381.68 L502.89,381.41 L503.17,381.15 L503.45,380.88 L503.72,380.61 L503.98,380.34 L504.23,380.07 L504.48,379.80 L504.71,379.52 L504.94,379.24 L505.17,378.97 L505.38,378.69 L505.58,378.41 L505.78,378.13 L505.97,377.85 L506.15,377.56 L506.32,377.28 L506.49,376.99 L506.64,376.71 L506.79,376.42 L506.93,376.13 L507.06,375.84 L507.18,375.55 L507.30,375.26 L507.40,374.97 L507.50,374.68 L507.59,374.39 L507.67,374.10 L507.74,373.80 L507.80,373.51 L507.85,373.22 L507.90,372.92 M496.50,403.36 L496.91,403.13 L497.32,402.90 L497.72,402.66 L498.12,402.43 L498.51,402.19 L498.89,401.95 L499.26,401.71 L499.63,401.47 L499.98,401.22 L500.34,400.97 L500.68,400.72 L501.02,400.47 L501.35,400.21 L501.67,399.96 L501.99,399.70 L502.29,399.44 L502.59,399.18 L502.89,398.91 L503.17,398.65 L503.45,398.38 L503.72,398.11 L503.98,397.84 L504.23,397.57 L504.48,397.30 L504.71,397.02 L504.94,396.74 L505.17,396.47 L505.38,396.19 L505.58,395.91 L505.78,395.63 L505.97,395.35 L506.15,395.06 L506.32,394.78 L506.49,394.49 L506.64,394.21 L506.79,393.92 L506.93,393.63 L507.06,393.34 L507.18,393.05 L507.30,392.76 L507.40,392.47 L507.50,392.18 L507.59,391.89 L507.67,391.60 L507.74,391.30 L507.80,391.01 L507.85,390.72 L507.90,390.42 M496.50,435.36 L496.91,435.13 L497.32,434.90 L497.72,434.66 L498.12,434.43 L498.51,434.19 L498.89,433.95 L499.26,433.71 L499.63,433.47 L499.98,433.22 L500.34,432.97 L500.68,432.72 L501.02,432.47 L501.35,432.21 L501.67,431.96 L501.99,431.70 L502.29,431.44 L502.59,431.18 L502.89,430.91 L503.17,430.65 L503.45,430.38 L503.72,430.11 L503.98,429.84 L504.23,429.57 L504.48,429.30 L504.71,429.02 L504.94,428.74 L505.17,428.47 L505.38,428.19 L505.58,427.91 L505.78,427.63 L505.97,427.35 L506.15,427.06 L506.32,426.78 L506.49,426.49 L506.64,426.21 L506.79,425.92 L506.93,425.63 L507.06,425.34 L507.18,425.05 L507.30,424.76 L507.40,424.47 L507.50,424.18 L507.59,423.89 L507.67,423.60 L507.74,423.30 L507.80,423.01 L507.85,422.72 L507.90,422.42 M496.50,465.86 L496.91,465.63 L497.32,465.40 L497.72,465.16 L498.12,464.93 L498.51,464.69 L498.89,464.45 L499.26,464.21 L499.63,463.97 L499.98,463.72 L500.34,463.47 L500.68,463.22 L501.02,462.97 L501.35,462.71 L501.67,462.46 L501.99,462.20 L502.29,461.94 L502.59,461.68 L502.89,461.41 L503.17,461.15 L503.45,460.88 L503.72,460.61 L503.98,460.34 L504.23,460.07 L504.48,459.80 L504.71,459.52 L504.94,459.24 L505.17,458.97 L505.38,458.69 L505.58,458.41 L505.78,458.13 L505.97,457.85 L506.15,457.56 L506.32,457.28 L506.49,456.99 L506.64,456.71 L506.79,456.42 L506.93,456.13 L507.06,455.84 L507.18,455.55 L507.30,455.26 L507.40,454.97 L507.50,454.68 L507.59,454.39 L507.67,454.10 L507.74,453.80 L507.80,453.51 L507.85,453.22 L507.90,452.92 M458,431.5 L496.5,388 M458,512.5 L496.5,469 M496.5,388 V469 M302.6,372.45 V386" stroke="#e4e4f0" stroke-width="0.7" fill="none"/>
<path d="M343.9,428.8 L345.6,429.6 L346.6,439.6 L345.3,441 L343.9,441Z" fill="#08081a"/><path d="M343.9,428.8 V441" stroke="#e4e4f0" stroke-width="0.7"/>
<path d="M489.5,387.5 L496.5,386 L496.5,389" fill="none" stroke="#e4e4f0" stroke-width="0.7"/>
<polygon points="366.20,393.10 384.50,389.20 403.40,382.40 426.40,393.10 438.20,394.20 423.60,406.00 423.00,412.20 403.40,409.40 378.10,411.10 379.20,407.10" fill="url(#gStar)"/>
<polygon points="379.2,407.7 403.4,399 423.6,406.6 423.0,412.2 403.4,409.4 378.1,411.1" fill="#8486ca" opacity="0.55"/>
<polygon points="366.20,393.10 384.50,389.20 403.40,382.40 426.40,393.10 438.20,394.20 423.60,406.00 423.00,412.20 403.40,409.40 378.10,411.10 379.20,407.10" fill="none" stroke="#e8e8f4" stroke-width="0.7"/>
<path d="M379.2,391 V407.7 M394.5,387 V403.5 M403.4,382.4 V409.4 M411,386 V401 M426.4,393.1 V406 M379.2,407.7 L403.4,399 L423.6,406.6" fill="none" stroke="#e8e8f4" stroke-width="0.6"/>
<path d="M396.7,335.5 L652.4,376.8 L558.4,484 L301.5,445.5Z" stroke="#a9a472" stroke-width="0.8" fill="none"/>
<path d="M525.4,232.2 L429.1,339.9 V590 M525.4,232.2 V478.5 L430,590" stroke="#a9a472" stroke-width="0.8" fill="none"/>
<path d="M477.7,402.5 V383" stroke="#d8cc80" stroke-width="0.9"/>
<path d="M477.7,370.5 L475.8,384 L479.6,384Z" fill="#1030e0"/>
<path d="M477.7,369 l-0.8,-1.5 h1.6z" fill="#d8c060"/>
<path d="M472,403.3 L477.3,398 L490,399.5 L490,411.5 L484,416.8 L472,415.3Z" fill="none" stroke="#5a5ad8" stroke-width="0.6"/>
<path d="M472,403.3 V415.3 L484,416.8" fill="none" stroke="#d04040" stroke-width="0.6"/>
<path d="M490,399.5 V411.5 L484,416.8" fill="none" stroke="#30a030" stroke-width="0.6"/>
<path d="M477.7,409.7 L469,420" stroke="#d02020" stroke-width="0.8"/>
<path d="M464,424.5 L469.5,419 L467.5,423.5Z" fill="#e01818"/><ellipse cx="466.3" cy="422.6" rx="1.9" ry="1.6" fill="#e01818"/>
<path d="M477.7,409.7 L503,414" stroke="#18a018" stroke-width="0.8"/>
<path d="M503.5,412.6 L512,415.5 L503.5,417.4Z" fill="#10b020"/>
<path d="M515,415 l2,2 M517,415 l-2,2" stroke="#30a030" stroke-width="0.5"/>
<path d="M485.5,322.25 L494.75,347.5 M478.25,337.25 L502.75,332.5 M485.5,340.25 L495.75,329.25" stroke="#22aa22" stroke-width="0.9"/>
<path d="M152,571 V559" stroke="#2040e0" stroke-width="0.9"/><path d="M152,571 L165,570.5" stroke="#20a020" stroke-width="0.9"/><circle cx="152" cy="571.3" r="1.1" fill="#d02020"/>
</g>
<path d="M672.5,258.2 a15.3,6.4 0 0 1 30.6,0" fill="none" stroke="#7e7e7e" stroke-width="2.4"/>
<ellipse cx="687.8" cy="258.2" rx="13" ry="4.6" fill="#1a1a1a"/>
<path d="M680,244.5 L682.5,242.4 L694.5,243 L694.4,255.5 L691.5,258.5 L680.3,256.5Z" fill="#8e8e8e"/>
<path d="M680,244.5 L682.5,242.4 L694.5,243 L692,245Z" fill="#a0a0a0"/><path d="M692,245 L694.5,243 L694.4,255.5 L691.5,258.5Z" fill="#7a7a7a"/>
<path d="M672.5,258.2 a15.3,6.4 0 0 0 30.6,0" fill="none" stroke="#8a8a8a" stroke-width="2.4"/>
<path d="M672.5,258.2 a15.3,6.4 0 0 0 30.6,0" fill="none" stroke="#c4c4c4" stroke-width="0.7"/>
</svg>
<div class="t" style="left:145px;top:230.5px;font-size:4.8px;color:#c8c8c8">[+] [Orthographic ] [Standard ] [Edged Faces ]</div><!-- ===== RIGHT COMMAND PANEL ===== -->
<div class="a" style="left:711px;top:227px;width:89px;height:362px;background:#444"></div>
<div class="a" style="left:714px;top:228px;width:84px;height:1px;background:#5a5a5a"></div>
<div class="a" style="left:727px;top:231px;width:12px;height:11px;background:#3a3a3a"></div>
<svg class="a" style="left:0;top:0" width="800" height="800">
 <path d="M719.5 232v8M715.5 236h8" stroke="#bdbdbd" stroke-width="0.9"/>
 <rect x="729" y="233" width="8" height="7" fill="none" stroke="#2aa8b0" stroke-width="0.9"/><path d="M731 239q0-4 4-5" stroke="#eee" fill="none" stroke-width="0.9"/>
 <path d="M742.5 232.5h8M743.5 235h6M744 235v6M749 235v6" stroke="#2aa8b0" stroke-width="1" fill="none"/><rect x="742.5" y="231.5" width="8" height="2" fill="#ddd"/>
 <circle cx="760" cy="236" r="3.2" fill="#ababab"/><path d="M757 236a3 3 0 0 1 2-2.8v5.6a3 3 0 0 1-2-2.8z" fill="#2a8a8a"/>
 <rect x="768" y="232.5" width="9" height="6" fill="#bbb"/><path d="M772.5 238.5v2M770.5 240.5h4" stroke="#bbb" stroke-width="0.8"/>
 <path d="M782.5 232.5l2 1.5l5 5.5" stroke="#bbb" stroke-width="1.2" fill="none"/>
</svg>
<div class="a" style="left:714px;top:244px;width:74.5px;height:8.5px;background:#555"></div>
<div class="t" style="left:716px;top:245.5px;font-size:4.5px;color:#e0e0e0">Cylinder001</div>
<div class="a" style="left:791px;top:244.5px;width:7.5px;height:8px;background:#9a9cf6"></div>
<div class="a" style="left:714px;top:255px;width:84.5px;height:8px;background:#555"></div>
<div class="t" style="left:715px;top:256px;font-size:4.5px;color:#d8d8d8">Modifier List</div>
<div class="t" style="left:793px;top:257px;font-size:4px;color:#e0e0e0">&#9660;</div>
<!-- stack -->
<div class="a" style="left:713.5px;top:265px;width:85.5px;height:52.8px;background:#3c3c3c;border:1px solid #d0d0d0"></div>
<div class="a" style="left:714.5px;top:266px;width:83.5px;height:7px;background:#404040"></div>
<div class="a" style="left:735.5px;top:273px;width:63px;height:7px;background:#4a84c8"></div>
<div class="a" style="left:714.5px;top:280px;width:83.5px;height:7px;background:#404040"></div>
<div class="a" style="left:714.5px;top:287px;width:83.5px;height:7px;background:#404040"></div>
<div class="a" style="left:714.5px;top:273px;width:83.5px;height:0.6px;background:#333"></div>
<div class="a" style="left:714.5px;top:280px;width:83.5px;height:0.6px;background:#333"></div>
<div class="a" style="left:714.5px;top:287px;width:83.5px;height:0.6px;background:#333"></div>
<div class="a" style="left:714.5px;top:294px;width:83.5px;height:0.6px;background:#333"></div>
<div class="a" style="left:727px;top:274px;width:8px;height:6px;border:0.6px solid #555;border-right:0"></div>
<div class="t" style="left:732px;top:267px;font-size:4.5px;color:#e8e8e8">Slice</div>
<div class="t" style="left:736px;top:274px;font-size:4.5px;color:#e8eef8">Slice Plane</div>
<div class="t" style="left:731.5px;top:281px;font-size:4.5px;color:#e0e0e0">Symmetry</div>
<div class="t" style="left:723px;top:288px;font-size:4.5px;color:#e0e0e0">Editable Poly</div>
<svg class="a" style="left:0;top:0" width="800" height="800">
 <g fill="none" stroke="#ddd" stroke-width="0.7"><path d="M716.5 269.5q2.5-2.5 5 0q-2.5 2.5-5 0z"/><path d="M716.5 283.5q2.5-2.5 5 0q-2.5 2.5-5 0z"/></g>
 <g fill="#ddd"><circle cx="719" cy="269.5" r="0.7"/><circle cx="719" cy="283.5" r="0.7"/>
 <path d="M725 268.5h3l-1.5 2z"/><path d="M726 282l2 1.5l-2 1.5z"/><path d="M717 289l2 1.5l-2 1.5z"/></g>
 <!-- icon row -->
 <path d="M716 329l3-3M719 326l2-2l1 1l-2 2z" stroke="#ccc" stroke-width="0.9" fill="#ccc"/>
 <path d="M726.5 322v8M741 322v8M766 322v8" stroke="#333" stroke-width="0.8"/>
 <rect x="729" y="321" width="9.5" height="9" fill="#4a84c8"/><rect x="732.5" y="322" width="2.5" height="7" fill="#9ad8e0" stroke="#ddd" stroke-width="0.4"/>
 <path d="M746.5 323h3l1.5 1.5v4h-4z" fill="none" stroke="#555" stroke-width="0.8"/>
 <path d="M757.5 323h4M758 324v5h3v-5" fill="none" stroke="#999" stroke-width="0.8"/>
 <rect x="771" y="323" width="5" height="6" fill="#bbb"/><path d="M773 327l4-5" stroke="#e8a020" stroke-width="1"/>
 <!-- separator -->
 <path d="M713 341h85" stroke="#3a3a3a" stroke-width="0.8"/><path d="M753 340.5h5" stroke="#888" stroke-width="0.8"/>
</svg>
<!-- Slice rollout -->
<div class="a" style="left:713.5px;top:343px;width:82px;height:177px;background:#474747;border:0.6px solid #3c3c3c"></div>
<div class="a" style="left:714px;top:343.5px;width:81px;height:8.5px;background:#4e4e4e"></div>
<div class="t" style="left:717px;top:345px;font-size:3.5px;color:#ddd">&#9660;</div>
<div class="t" style="left:722px;top:345px;font-size:4.6px;color:#f0f0f0;font-weight:bold">Slice</div>
<div class="a" style="left:790.5px;top:346px;width:2px;height:3px;border:0.5px solid #666"></div>
<div class="a" style="left:716px;top:353.5px;width:77px;height:8px;background:#575757"></div>
<div class="t" style="left:717px;top:354.5px;font-size:4.5px;color:#d8d8d8">Planar</div>
<div class="t" style="left:788px;top:355.5px;font-size:4px;color:#e0e0e0">&#9660;</div>
<div class="a" style="left:715.5px;top:367px;width:78px;height:35px;background:#424242;border:0.6px solid #505050"></div>
<div class="t" style="left:717.5px;top:363.5px;font-size:4.5px;color:#e0e0e0;background:#474747;padding-right:1px">Slice Along</div>
<div class="a" style="left:719px;top:370px;width:35px;height:8px;background:#575757"></div>
<div class="a" style="left:719px;top:380.3px;width:35px;height:8.4px;background:#4d88cc"></div>
<div class="a" style="left:719px;top:391px;width:35px;height:8.1px;background:#4d88cc"></div>
<div class="t" style="left:734px;top:371px;font-size:5.6px;color:#eee">X</div>
<div class="t" style="left:734px;top:381.5px;font-size:5.6px;color:#e8f0ff">Y</div>
<div class="t" style="left:734px;top:392px;font-size:5.6px;color:#e8f0ff">Z</div>
<div class="a" style="left:756px;top:372px;width:5px;height:5px;background:#4a4a4a"></div>
<div class="a" style="left:756px;top:382.4px;width:5px;height:5px;background:#555"></div>
<div class="a" style="left:756px;top:393px;width:5px;height:5px;background:#555"></div>
<div class="t" style="left:763px;top:371.5px;font-size:4.5px;color:#777">Flip</div>
<div class="t" style="left:763px;top:382px;font-size:4.5px;color:#e6e6e6">Flip</div>
<div class="t" style="left:763px;top:392.5px;font-size:4.5px;color:#e6e6e6">Flip</div>
<div class="a" style="left:716px;top:405px;width:66px;height:8px;background:#555"></div>
<div class="t" style="left:736px;top:406px;font-size:4.5px;color:#ddd">Align to Face</div>
<div class="a" style="left:785px;top:405px;width:8.2px;height:8px;background:#555"></div>
<svg class="a" style="left:785px;top:405px" width="9" height="8"><path d="M2.3 2.5a2.5 2.5 0 0 0 0 3M6.2 2.5a2.5 2.5 0 0 1 0 3" stroke="#eee" stroke-width="0.9" fill="none"/></svg>
<div class="a" style="left:716px;top:415px;width:77px;height:8px;background:#555"></div>
<div class="t" style="left:743px;top:416px;font-size:4.5px;color:#ddd">Pick Object</div>
<div class="a" style="left:715.5px;top:429px;width:78px;height:76px;background:#424242;border:0.6px solid #505050"></div>
<div class="t" style="left:717.5px;top:425.5px;font-size:4.5px;color:#e0e0e0;background:#474747;padding-right:1px">Slice Type</div>
<div class="t" style="font-size:4.5px;color:#e0e0e0;left:0;top:0">
<span class="a" style="left:726px;top:433.5px">Refine Mesh</span>
<span class="a" style="left:726px;top:444px">Split Mesh</span>
<span class="a" style="left:726px;top:454.5px">Remove Positive</span>
<span class="a" style="left:726px;top:465px">Remove Negative</span>
<span class="a" style="left:726px;top:475.5px">Cap</span>
<span class="a" style="left:726px;top:485.5px">Set Cap Material</span>
<span class="a" style="left:718px;top:496px;color:#6a6a6a">Material ID:</span>
</div>
<svg class="a" style="left:0;top:0" width="800" height="800">
 <circle cx="722" cy="436.3" r="2.2" fill="#4a4a4a"/><circle cx="722" cy="446.8" r="2.2" fill="#4a4a4a"/>
 <circle cx="722" cy="457.3" r="2.2" fill="#ececec"/><circle cx="722" cy="467.8" r="2.2" fill="#4a4a4a"/>
 <rect x="719.8" y="476" width="4.5" height="4.5" fill="#4a4a4a"/><path d="M720.3 478.3l1.3 1.3l2.3-3" stroke="#eee" stroke-width="0.8" fill="none"/>
 <rect x="719.8" y="486.2" width="4.5" height="4.5" fill="#2c2c2c"/>
 <path d="M735 488.5v6l1.4-1.3l1.2 2.3l0.8-0.4l-1.1-2.2h2z" fill="#eee" stroke="#222" stroke-width="0.3"/>
 <rect x="756.5" y="495" width="33" height="8" fill="#454545" stroke="#4c4c4c" stroke-width="0.5"/>
</svg>
<div class="t" style="left:758px;top:496.5px;font-size:4.5px;color:#666">1</div>
<div class="t" style="left:787px;top:496px;font-size:3.5px;line-height:3px;color:#777">&#9650;<br>&#9660;</div>
<div class="t" style="left:715px;top:510px;font-size:4.5px;color:#e0e0e0">Operate On:</div>
<div class="a" style="left:751px;top:508px;width:42px;height:9px;background:#575757"></div>
<div class="t" style="left:752.5px;top:510px;font-size:4.5px;color:#e0e0e0">Automatic</div>
<div class="t" style="left:788px;top:511px;font-size:4px;color:#e0e0e0">&#9660;</div>
<!-- ===== TIME SLIDER / TIMELINE / STATUS ===== -->
<div class="a" style="left:0;top:580px;width:800px;height:44.5px;background:#444"></div>
<div class="a" style="left:1px;top:583px;width:1px;height:15px;background:#5a5a5a"></div>
<div class="a" style="left:4.4px;top:582.4px;width:6.2px;height:6px;background:#555"></div>
<div class="a" style="left:11.2px;top:582.4px;width:50.7px;height:3.3px;background:#5c5c5c"></div>
<div class="a" style="left:11.2px;top:585.7px;width:7px;height:2.5px;background:#5c5c5c"></div>
<div class="a" style="left:63px;top:582.4px;width:5.5px;height:3.3px;background:#555"></div>
<div class="a" style="left:25px;top:590.3px;width:754px;height:10.7px;background:#2e2e2e"></div>

<svg class="a" style="left:0;top:0" width="800" height="800">
<path d="M8.5 585.5l-2 -1.5v3z" fill="#aaa"/>
<path d="M29 583.6h14" stroke="#9a9a9a" stroke-width="0.6" stroke-dasharray="1.2 0.8"/>
<path d="M34.5 590.5V596 M42.5 590.5V596 M49.5 590.5V596 M57.5 590.5V596 M64.5 590.5V596 M72.5 590.5V596 M79.5 590.5V596 M87.5 590.5V596 M94.5 590.5V596 M102.5 590.5V596 M109.5 590.5V596 M117.5 590.5V596 M124.5 590.5V596 M132.5 590.5V596 M139.5 590.5V596 M147.5 590.5V596 M154.5 590.5V596 M162.5 590.5V596 M169.5 590.5V596 M177.5 590.5V596 M184.5 590.5V596 M192.5 590.5V596 M199.5 590.5V596 M207.5 590.5V596 M214.5 590.5V596 M222.5 590.5V596 M229.5 590.5V596 M237.5 590.5V596 M244.5 590.5V596 M252.5 590.5V596 M259.5 590.5V596 M267.5 590.5V596 M274.5 590.5V596 M282.5 590.5V596 M289.5 590.5V596 M297.5 590.5V596 M304.5 590.5V596 M312.5 590.5V596 M319.5 590.5V596 M327.5 590.5V596 M334.5 590.5V596 M342.5 590.5V596 M349.5 590.5V596 M357.5 590.5V596 M364.5 590.5V596 M372.5 590.5V596 M379.5 590.5V596 M387.5 590.5V596 M394.5 590.5V596 M402.5 590.5V596 M409.5 590.5V596 M416.5 590.5V596 M424.5 590.5V596 M431.5 590.5V596 M439.5 590.5V596 M446.5 590.5V596 M454.5 590.5V596 M461.5 590.5V596 M469.5 590.5V596 M476.5 590.5V596 M484.5 590.5V596 M491.5 590.5V596 M499.5 590.5V596 M506.5 590.5V596 M514.5 590.5V596 M521.5 590.5V596 M529.5 590.5V596 M536.5 590.5V596 M544.5 590.5V596 M551.5 590.5V596 M559.5 590.5V596 M566.5 590.5V596 M574.5 590.5V596 M581.5 590.5V596 M589.5 590.5V596 M596.5 590.5V596 M604.5 590.5V596 M611.5 590.5V596 M619.5 590.5V596 M626.5 590.5V596 M634.5 590.5V596 M641.5 590.5V596 M649.5 590.5V596 M656.5 590.5V596 M664.5 590.5V596 M671.5 590.5V596 M679.5 590.5V596 M686.5 590.5V596 M694.5 590.5V596 M701.5 590.5V596 M709.5 590.5V596 M716.5 590.5V596 M724.5 590.5V596 M731.5 590.5V596 M739.5 590.5V596 M746.5 590.5V596 M754.5 590.5V596 M761.5 590.5V596 M769.5 590.5V596 M776.5 590.5V596" stroke="#626262" stroke-width="0.9"/>
<rect x="26" y="591" width="3" height="10" rx="1" fill="#c9b63a"/>
<path d="M10.5 593v5M12.5 593l2 5" stroke="#2aa8b0" stroke-width="0.9"/><path d="M10 593.5v4" stroke="#ccc" stroke-width="0.9"/>
<path d="M9 599.5h8" stroke="#777" stroke-width="0.5"/>
<rect x="428.5" y="606.5" width="4.5" height="4.5" fill="#2ab8c8"/><path d="M427 605.5h1M427 612h1M433.5 605.5h1M433.5 612h1" stroke="#aaa" stroke-width="0.8"/>
<rect x="439.5" y="608" width="3.6" height="3.5" fill="#ddd"/><path d="M440.2 608v-1a1.1 1.1 0 0 1 2.2 0v1" stroke="#ddd" stroke-width="0.6" fill="none"/>
<rect x="449.5" y="605.8" width="6" height="6" fill="none" stroke="#ccc" stroke-width="0.6"/><path d="M452.5 606.5l2.2 2.5l-2.2 2.5l-2.2-2.5z" fill="none" stroke="#ddd" stroke-width="0.6"/>
<path d="M502.5 615.5v7" stroke="#333" stroke-width="0.8"/>
<rect x="504" y="615" width="8.5" height="8" fill="#555"/><circle cx="508.2" cy="619" r="2.2" fill="#ccc"/>
<circle cx="536.3" cy="619" r="2" fill="#2ecc40"/>
<rect x="541.3" y="615" width="7.5" height="8" fill="#555"/><circle cx="545" cy="619" r="2.2" fill="none" stroke="#f4f4f4" stroke-width="1"/>
<circle cx="558.4" cy="619" r="2.2" fill="none" stroke="#999" stroke-width="0.6"/>
<g fill="#e8e8e8">
<rect x="612" y="606.3" width="0.9" height="4.8"/><path d="M616 606.3v4.8l-3-2.4zM619 606.3v4.8l-3-2.4z"/>
<path d="M625 606.3v4.8l-3-2.4z"/><rect x="626" y="606.3" width="0.9" height="4.8"/><rect x="628.2" y="606.3" width="0.9" height="4.8"/>
<path d="M632.5 605.5v6.5l5.5-3.25z"/><path d="M637 611.5l1.2 1.2l1.2-1.2z" fill="#ccc"/>
<rect x="641.3" y="606.3" width="0.9" height="4.8"/><rect x="643.4" y="606.3" width="0.9" height="4.8"/><path d="M645 606.3v4.8l3-2.4z"/>
<path d="M653 606.3v4.8l3-2.4zM656 606.3v4.8l3-2.4z"/><rect x="659" y="606.3" width="0.9" height="4.8"/>
</g>
<path d="M614 618.5l1.7-1.5l1.7 1.5l-1.7 1.5z" fill="#ccc"/>
<rect x="621.5" y="615" width="28.5" height="7" fill="#555"/>
<circle cx="656" cy="617.5" r="1.8" fill="#ddd"/><circle cx="657.8" cy="619.8" r="1.6" fill="#e8a020"/>
<rect x="665.3" y="605" width="17.7" height="17" fill="#555"/>
<path d="M673.5 608.5v10M668.5 613.5h10" stroke="#f0f0f0" stroke-width="2.2"/>
<path d="M676 619.5l3.5-3" stroke="#2aa8b8" stroke-width="1.2"/><circle cx="676" cy="619.8" r="1.3" fill="none" stroke="#2aa8b8" stroke-width="0.8"/>
<rect x="685" y="604.6" width="19" height="8" fill="#555"/><rect x="706" y="604.6" width="48" height="8" fill="#555"/>
<rect x="685" y="614.3" width="19" height="7.5" fill="#555"/><rect x="717.5" y="614.3" width="36.5" height="7.5" fill="#555"/>
<path d="M708 622v-5l3-1.5l3 1.5v5" stroke="#2aa8b8" stroke-width="0.9" fill="none"/><path d="M708.5 616.5l2.5-1.2l2.5 1.2" stroke="#ddd" stroke-width="0.8" fill="none"/>
<circle cx="763.5" cy="607.5" r="1.8" fill="none" stroke="#e0e0e0" stroke-width="0.8"/><path d="M762 609l-2 2.2" stroke="#e0e0e0" stroke-width="0.9"/>
<circle cx="774.5" cy="607.3" r="1.8" fill="#2aa8b8"/><path d="M773 609l-2 2.2" stroke="#ddd" stroke-width="0.9"/>
<circle cx="781.5" cy="608" r="2.2" fill="#2aa8b8"/><path d="M778.5 605.5l1 1M784.5 605.5l-1 1M778.5 610.5l1-1M784.5 610.5l-1 1" stroke="#ddd" stroke-width="0.6"/>
<path d="M790 608l3-2v4z" fill="#ddd"/><circle cx="794.5" cy="607.5" r="1.6" fill="#2aa8b8"/>
<rect x="760" y="615.5" width="5" height="5" fill="none" stroke="#2aa8b8" stroke-width="0.8" stroke-dasharray="1 0.8"/><circle cx="762.5" cy="618" r="1" fill="#2aa8b8"/>
<path d="M771 622v-4.5M772.3 622v-6M773.6 622v-5.5M774.9 622v-4" stroke="#e0e0e0" stroke-width="1"/><path d="M770.5 620.5h5" stroke="#e0e0e0" stroke-width="2"/>
<path d="M778.5 621l5-5" stroke="#ccc" stroke-width="1.6"/><circle cx="783.5" cy="616.5" r="1.2" fill="#2aa8b8"/>
<rect x="790" y="615.5" width="6" height="6" fill="#ddd"/><path d="M790 621.5l6-6v6z" fill="#333"/>
</svg>
<div class="t" style="left:0;top:596.3px;font-size:5px;color:#bdbdbd"><span class="a" style="left:58.95px;width:12px;text-align:center">5</span><span class="a" style="left:96.40px;width:12px;text-align:center">10</span><span class="a" style="left:133.85px;width:12px;text-align:center">15</span><span class="a" style="left:171.30px;width:12px;text-align:center">20</span><span class="a" style="left:208.75px;width:12px;text-align:center">25</span><span class="a" style="left:246.20px;width:12px;text-align:center">30</span><span class="a" style="left:283.65px;width:12px;text-align:center">35</span><span class="a" style="left:321.10px;width:12px;text-align:center">40</span><span class="a" style="left:358.55px;width:12px;text-align:center">45</span><span class="a" style="left:396.00px;width:12px;text-align:center">50</span><span class="a" style="left:433.45px;width:12px;text-align:center">55</span><span class="a" style="left:470.90px;width:12px;text-align:center">60</span><span class="a" style="left:508.35px;width:12px;text-align:center">65</span><span class="a" style="left:545.80px;width:12px;text-align:center">70</span><span class="a" style="left:583.25px;width:12px;text-align:center">75</span><span class="a" style="left:620.70px;width:12px;text-align:center">80</span><span class="a" style="left:658.15px;width:12px;text-align:center">85</span><span class="a" style="left:695.60px;width:12px;text-align:center">90</span><span class="a" style="left:733.05px;width:12px;text-align:center">95</span><span class="a" style="left:770.50px;width:12px;text-align:center">100</span></div>
<div class="t" style="left:26.6px;top:596px;font-size:4.3px;color:#333">0</div>
<div class="a" style="left:2px;top:603.6px;width:40.5px;height:9.6px;background:#e6c9c9"></div>
<div class="a" style="left:2px;top:613.6px;width:40.5px;height:9.2px;background:#fff;border-top:0.6px solid #999"></div>
<div class="t" style="left:3.5px;top:615.5px;font-size:5.2px;color:#777;font-family:'Liberation Mono',monospace">MAXScript Mi</div>
<div class="t" style="left:46.3px;top:606.5px;font-size:4.6px;color:#e6e6e6">1 Object Selected</div>
<div class="t" style="left:459px;top:606.3px;font-size:4.6px;color:#ddd">X:</div>
<div class="a" style="left:465px;top:605.5px;width:27.5px;height:7px;background:#555"></div>
<div class="t" style="left:466.5px;top:606.5px;font-size:4.4px;color:#aaa">-0,138</div>
<div class="t" style="left:494px;top:606.3px;font-size:4.6px;color:#ddd">Y:</div>
<div class="a" style="left:500px;top:605.5px;width:27.5px;height:7px;background:#555"></div>
<div class="t" style="left:501.5px;top:606.5px;font-size:4.4px;color:#aaa">9,758</div>
<div class="t" style="left:529px;top:606.3px;font-size:4.6px;color:#ddd">Z:</div>
<div class="a" style="left:534.5px;top:605.5px;width:28px;height:7px;background:#555"></div>
<div class="t" style="left:536px;top:606.5px;font-size:4.4px;color:#aaa">62,497</div>
<div class="t" style="left:565px;top:606.3px;font-size:4.6px;color:#e0e0e0">Grid = 10,0</div>
<div class="t" style="left:515px;top:616.3px;font-size:4.6px;color:#ddd">Enabled:</div>
<div class="t" style="left:565px;top:616.3px;font-size:4.6px;color:#ccc">Add Time Tag</div>
<div class="t" style="left:624px;top:616px;font-size:4.4px;color:#aaa">0</div>
<div class="t" style="left:686px;top:605.8px;font-size:4.5px;color:#d0d0d0">Auto Key</div>
<div class="t" style="left:708px;top:605.8px;font-size:4.6px;color:#e0e0e0">Selected</div>
<div class="t" style="left:749px;top:606.5px;font-size:3.5px;color:#ddd">&#9660;</div>
<div class="t" style="left:687px;top:615.3px;font-size:4.5px;color:#d0d0d0">Set Key</div>
<div class="t" style="left:722px;top:615.3px;font-size:4.5px;color:#d0d0d0">Key Filters...</div>

<svg class="a" style="left:0;top:0" width="800" height="800"><g fill="#bbb">
<path d="M489.5 608.7l1-1.5l1 1.5zM489.5 610.0l1 1.5l1-1.5z"/>
<path d="M524.5 608.7l1-1.5l1 1.5zM524.5 610.0l1 1.5l1-1.5z"/>
<path d="M559.5 608.7l1-1.5l1 1.5zM559.5 610.0l1 1.5l1-1.5z"/>
<path d="M646.5 618.2l1-1.5l1 1.5zM646.5 619.5l1 1.5l1-1.5z"/>
</g></svg></body></html>
